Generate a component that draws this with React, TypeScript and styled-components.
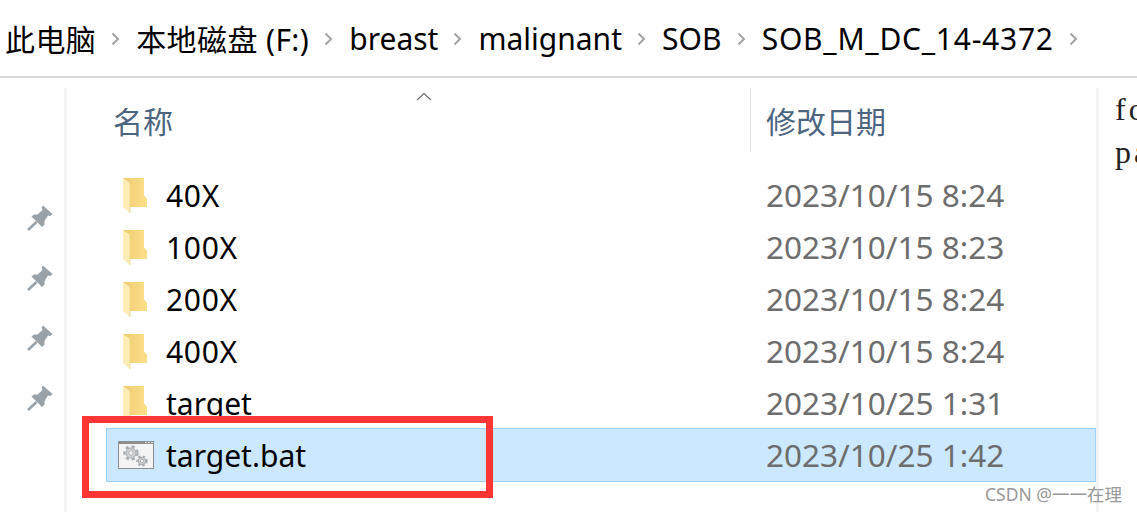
import styled, { createGlobalStyle } from 'styled-components';

const FONT = `'Noto Sans', 'Noto Sans CJK SC', sans-serif`;

// per-label tracking: the reference's font runs wider on digits and capitals
const crumbs = [
  { label: '此电脑', spacing: 0.4 },
  { label: '本地磁盘 (F:)', spacing: 0.4 },
  { label: 'breast', spacing: 0 },
  { label: 'malignant', spacing: 0 },
  { label: 'SOB', spacing: 0.1 },
  { label: 'SOB_M_DC_14-4372', spacing: 0.75 },
];

const files = [
  { name: '40X', date: '2023/10/15 8:24', kind: 'folder', spacing: 0.7 },
  { name: '100X', date: '2023/10/15 8:23', kind: 'folder', spacing: 0.7 },
  { name: '200X', date: '2023/10/15 8:24', kind: 'folder', spacing: 0.7 },
  { name: '400X', date: '2023/10/15 8:24', kind: 'folder', spacing: 0.7 },
  { name: 'target', date: '2023/10/25 1:31', kind: 'folder', spacing: 0 },
  { name: 'target.bat', date: '2023/10/25 1:42', kind: 'bat', spacing: 0, selected: true },
];

const Chevron = () => (
  <svg width='9' height='14' viewBox='0 0 9 14'>
    <path d='M1.5 1.5 L7 7 L1.5 12.5' fill='none' stroke='#a3a3a3' strokeWidth='2' />
  </svg>
);

const PinIcon = () => (
  <svg width='28' height='28' viewBox='0 0 28 28'>
    <path d='M17 1.5 L26.5 10 L24.5 12 L22 11.5 L18.5 17 L18.5 20.5 L16 23 L5.5 12.5 L8 10.5 L11.5 10.5 L16.5 6 L15.5 3.5 Z' fill='#98a2a8' />
    <path d='M10.5 18 L2 26' stroke='#98a2a8' strokeWidth='2.6' />
  </svg>
);

const FolderIcon = () => (
  <svg width='24' height='35' viewBox='0 0 24 35'>
    <defs>
      <linearGradient id='folderBack' x1='0' y1='0' x2='1' y2='0'>
        <stop offset='0' stopColor='#eecb72' />
        <stop offset='1' stopColor='#fde08a' />
      </linearGradient>
    </defs>
    <path d='M0 0 H21 V17 L24 21 V29 H7 Z' fill='url(#folderBack)' />
    <path d='M0 0 L7 5 V35 L0 29 Z' fill='#fdeeb6' />
    <path d='M7 5 V35' stroke='#f2d488' strokeWidth='0.8' />
  </svg>
);

const Gear = ({ cx, cy, r }: { cx: number; cy: number; r: number }) => (
  <g fill='none' stroke='#a4aaae'>
    <circle
      cx={cx}
      cy={cy}
      r={r * 0.88}
      strokeWidth={r * 0.3}
      strokeDasharray={`${r * 0.42} ${r * 0.42}`}
    />
    <circle cx={cx} cy={cy} r={r * 0.68} fill='#cdd1d4' strokeWidth='1' />
    <circle cx={cx} cy={cy} r={r * 0.3} fill='#f1f1f1' strokeWidth='0.8' />
  </g>
);

const BatIcon = () => (
  <svg width='36' height='28' viewBox='0 0 36 28'>
    <rect x='0.5' y='0.5' width='35' height='27' fill='#f4f4f4' stroke='#8f8f8f' />
    <rect x='0' y='0' width='36' height='3' fill='#8f8f8f' />
    <rect x='27' y='1' width='2' height='1' fill='#d8d8d8' />
    <rect x='30' y='1' width='2' height='1' fill='#d8d8d8' />
    <rect x='33' y='1' width='2' height='1' fill='#d8d8d8' />
    <Gear cx={13} cy={12} r={7.5} />
    <Gear cx={24} cy={20} r={5.5} />
  </svg>
);

export default function App() {
  return (
    <Page>
      <GlobalStyle />
      <Breadcrumb>
        {crumbs.map((c) => (
          <Crumb key={c.label}>
            <CrumbLabel $spacing={c.spacing}>{c.label}</CrumbLabel>
            <Chevron />
          </Crumb>
        ))}
      </Breadcrumb>
      <Body>
        <Gutter>
          <PinIcon />
          <PinIcon />
          <PinIcon />
          <PinIcon />
        </Gutter>
        <ListPane>
          <HeaderRow>
            <SortCaret>
              <svg width='16' height='9' viewBox='0 0 16 9'>
                <path d='M1 8 L8 1.5 L15 8' fill='none' stroke='#6d6d6d' strokeWidth='1.2' />
              </svg>
            </SortCaret>
            <HeaderCell>名称</HeaderCell>
            <HeaderCell $divided>修改日期</HeaderCell>
          </HeaderRow>
          <Rows>
            {files.map((f) => (
              <Row key={f.name} $selected={f.selected}>
                <IconSlot $inset={f.kind === 'folder' ? 16 : 11}>
                  {f.kind === 'folder' ? <FolderIcon /> : <BatIcon />}
                </IconSlot>
                <FileName $spacing={f.spacing}>{f.name}</FileName>
                <FileDate>{f.date}</FileDate>
              </Row>
            ))}
          </Rows>
        </ListPane>
        <CodePeek>
          <CodeLine>fo</CodeLine>
          <CodeLine>pa</CodeLine>
        </CodePeek>
      </Body>
      <RedBox />
      <Watermark>CSDN @一一在理</Watermark>
    </Page>
  );
}

const GlobalStyle = createGlobalStyle`
  html, body {
    margin: 0;
    padding: 0;
    background: #fff;
    overflow: hidden;
  }
`;

const Page = styled.div`
  position: relative;
  width: 1137px;
  height: 512px;
  overflow: hidden;
  background: #fff;
  font-family: ${FONT};
  color: #000;
`;

const Breadcrumb = styled.div`
  display: flex;
  align-items: center;
  height: 76px;
  padding-left: 5px;
  border-bottom: 2px solid #d9d9d9;
  font-size: 30px;
  white-space: pre;
`;

const Crumb = styled.div`
  display: flex;
  align-items: center;
  gap: 15px;
  margin-right: 16px;

  svg {
    margin-top: 2px;
    flex: none;
  }
`;

const CrumbLabel = styled.span<{ $spacing: number }>`
  letter-spacing: ${({ $spacing }) => $spacing}px;
`;

const Body = styled.div`
  display: flex;
  height: 434px;
  padding-top: 10px;
  box-sizing: border-box;
`;

const Gutter = styled.div`
  width: 64px;
  height: 308px;
  flex: none;
  border-right: 3px solid #f5f5f5;
  display: flex;
  flex-direction: column;
  align-items: flex-end;
  gap: 32px;
  padding-top: 116px;

  svg {
    flex: none;
    margin-right: 10px;
  }
`;

const ListPane = styled.div`
  width: 1032px;
  flex: none;
  padding-left: 39px;
  box-sizing: border-box;
  border-right: 3px solid #f5f5f5;
`;

const HeaderRow = styled.div`
  position: relative;
  display: grid;
  grid-template-columns: 644px 1fr;
  height: 64px;
  margin-bottom: 17px;
`;

const SortCaret = styled.div`
  position: absolute;
  left: 310px;
  top: 4px;
  line-height: 0;
`;

const HeaderCell = styled.div<{ $divided?: boolean }>`
  display: flex;
  align-items: center;
  height: 64px;
  padding-left: ${({ $divided }) => ($divided ? '15px' : '7px')};
  font-size: 30px;
  color: #4c6580;
  border-left: ${({ $divided }) => ($divided ? '1px solid #e5e5e5' : 'none')};
  font-family: 'Noto Sans CJK SC', sans-serif;
`;

const Rows = styled.div`
  display: flex;
  flex-direction: column;
`;

const Row = styled.div<{ $selected?: boolean }>`
  display: grid;
  grid-template-columns: 59px 600px 1fr;
  align-items: center;
  height: ${({ $selected }) => ($selected ? '54px' : '52px')};
  box-sizing: border-box;
  background: ${({ $selected }) => ($selected ? '#cce8ff' : 'transparent')};
  border: 1px solid ${({ $selected }) => ($selected ? '#99d1ff' : 'transparent')};
  margin-top: ${({ $selected }) => ($selected ? '-1px' : '0')};
`;

const IconSlot = styled.div<{ $inset: number }>`
  display: flex;
  padding-left: ${({ $inset }) => $inset}px;
  line-height: 0;
`;

const FileName = styled.div<{ $spacing: number }>`
  font-size: 30px;
  letter-spacing: ${({ $spacing }) => $spacing}px;
  white-space: pre;
`;

const FileDate = styled.div`
  font-size: 31.5px;
  line-height: 42px;
  color: #6d6d6d;
  white-space: pre;
`;

const CodePeek = styled.div`
  padding: 0 0 0 16px;
  font-family: 'Liberation Serif', serif;
  font-size: 32px;
  line-height: 43px;
  letter-spacing: 3px;
  color: #222;
  white-space: pre;
`;

const CodeLine = styled.div``;

const RedBox = styled.div`
  position: absolute;
  left: 82px;
  top: 416px;
  width: 411px;
  height: 82px;
  box-sizing: border-box;
  border: 7px solid #ff3636;
`;

const Watermark = styled.div`
  position: absolute;
  right: 15px;
  top: 483px;
  font-size: 17.5px;
  line-height: 22px;
  color: #999;
`;
